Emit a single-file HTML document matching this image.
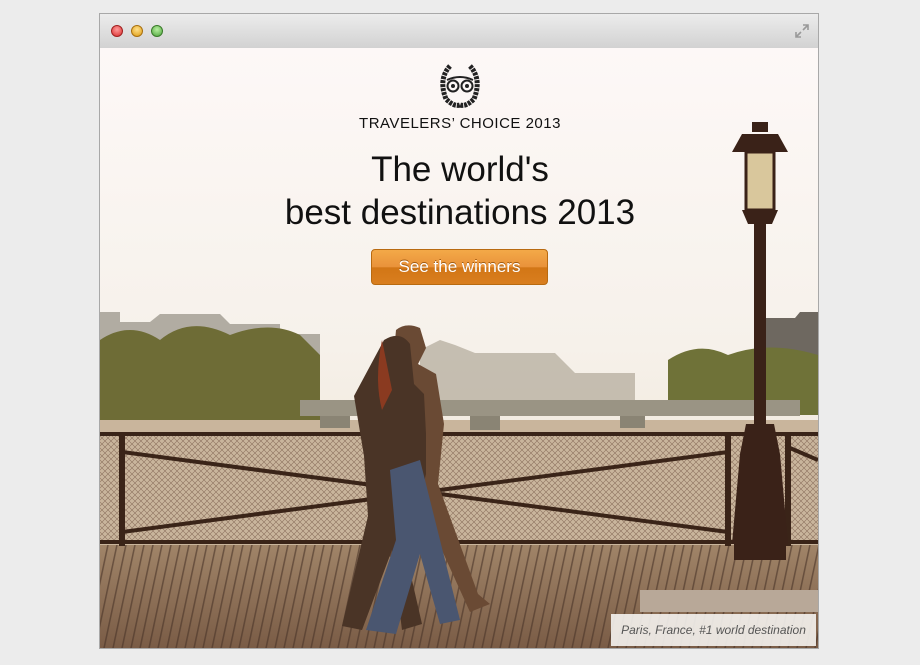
<!DOCTYPE html>
<html><head><meta charset="utf-8"><style>
body{margin:0;width:920px;height:665px;background:#ececec;position:relative;overflow:hidden;font-family:"Liberation Sans",sans-serif}
.win{position:absolute;left:99px;top:13px;width:718px;height:634px;border:1px solid #a8a8a8;background:#fff}
.bar{position:absolute;left:0;top:0;width:718px;height:34px;background:linear-gradient(#ececec,#d2d2d2);border-bottom:1px solid #9a9a9a}
.dot{position:absolute;top:11px;width:12px;height:12px;border-radius:50%;box-sizing:border-box}
.t{position:absolute;left:0;width:920px;text-align:center;color:#111}
.btn{position:absolute;left:371px;top:249px;width:175px;height:34px;border:1px solid #b86a10;border-radius:4px;background:linear-gradient(#f3a948 0%,#e9923a 50%,#d27615 52%,#d97e1f 100%);color:#fff;font-size:17px;line-height:34px;text-align:center;text-shadow:0 -1px 0 #a05a10}
.cap{position:absolute;left:611px;top:614px;width:205px;height:32px;background:rgba(245,243,240,.9);font-style:italic;font-size:12px;color:#555;line-height:32px;text-align:center}
</style></head><body>
<div class="win">
<div class="bar">
<div class="dot" style="left:11px;background:radial-gradient(circle at 50% 35%,#ff9a9a,#d82b2b);border:1px solid #a02020"></div>
<div class="dot" style="left:31px;background:radial-gradient(circle at 50% 35%,#ffe08a,#dd9a10);border:1px solid #a87010"></div>
<div class="dot" style="left:51px;background:radial-gradient(circle at 50% 35%,#b8f0a0,#4aa23a);border:1px solid #3a7a2a"></div>
<svg style="position:absolute;left:694px;top:9px" width="16" height="16" viewBox="0 0 16 16"><path d="M9 2h5v5M14 2l-5 5M7 14H2V9M2 14l5-5" stroke="#999" stroke-width="1.6" fill="none"/></svg>
</div>
</div>
<svg style="position:absolute;left:100px;top:48px" width="718" height="600" viewBox="100 48 718 600">
<defs>
<linearGradient id="sky" x1="0" y1="0" x2="0" y2="1"><stop offset="0" stop-color="#fdf8f7"/><stop offset=".5" stop-color="#f6f1ea"/><stop offset="1" stop-color="#e8dcc8"/></linearGradient>
<linearGradient id="deck" x1="0" y1="0" x2="0" y2="1"><stop offset="0" stop-color="#a08468"/><stop offset="1" stop-color="#7a5c46"/></linearGradient>
<pattern id="mesh" width="6" height="6" patternUnits="userSpaceOnUse"><path d="M0 0L6 6M6 0L0 6" stroke="#5a3a2a" stroke-width=".6" opacity=".55"/></pattern>
<pattern id="plank" width="9" height="120" patternUnits="userSpaceOnUse" patternTransform="skewX(-12)"><rect x="7" width="1.6" height="120" fill="#4a3428" opacity=".6"/></pattern>
</defs>
<rect x="100" y="48" width="718" height="600" fill="url(#sky)"/>
<path d="M100 312h20v10h30l10-8h60l10 10h50v10h40v50h-220z" fill="#9a948a" opacity=".75"/>
<path d="M420 350l20-10 15 5 20 8h80l20 20h60v30h-215z" fill="#b0a898" opacity=".7"/>
<path d="M765 318h30l5-6h18v80h-53z" fill="#6e6860"/>
<path d="M100 340q30-20 60 0 30-25 70-5 40-15 70 0l20 20v75h-220z" fill="#6e6c36"/>
<path d="M668 360q30-20 60-5 40-15 90 0v60h-150z" fill="#6f7238"/>
<rect x="100" y="420" width="718" height="125" fill="#c9b59c"/>
<path d="M300 400h500v16h-500z" fill="#9a9484"/>
<path d="M320 416h30v12h-30zM470 416h30v14h-30zM620 416h25v12h-25z" fill="#8a8474"/>
<rect x="100" y="545" width="718" height="103" fill="url(#deck)"/>
<rect x="100" y="545" width="718" height="103" fill="url(#plank)"/>
<rect x="100" y="436" width="718" height="106" fill="url(#mesh)"/>
<g stroke="#3a2418" fill="none">
<path d="M100 434H818M100 542H818" stroke-width="4"/>
<path d="M122 434v112M728 434v112M788 434v112" stroke-width="6"/>
<path d="M122 452L728 532M122 532L728 452M790 448L818 460" stroke-width="4"/>
</g>
<g fill="#3a2218">
<path d="M752 122h16v10h-16zM742 134h36l10 18h-56z"/>
<rect x="746" y="152" width="28" height="58" fill="#d9c79c" stroke="#3a2218" stroke-width="3"/>
<path d="M742 210h36l-6 14h-24zM754 224h12v200h-12z"/>
<path d="M746 424h28l6 30h-40zM740 454h40l8 90h-56zM734 544h52v16h-52z"/>
</g>
<g>
<path d="M396 330q10-8 24-2l6 20-8 16 18 10 8 50-6 60 40 110 12 10-20 8-50-110-14 60-30-10z" fill="#6a4a34"/>
<path d="M384 340q16-10 26 4l4 40 10 10 2 40 0 40-20 80 16 70-20 6-10-80-30 80-20-4 26-110-4-60-10-60z" fill="#4a3426"/>
<path d="M390 470l30-10 20 80 20 80-20 4-20-70-24 80-30-4 30-90z" fill="#4a5670"/>
<path d="M382 340q-8 40 0 70l10-20z" fill="#8a3a20"/>
</g>
<path d="M640 590h178v22h-178z" fill="#b8a898"/>
</svg>
<svg style="position:absolute;left:436px;top:61px" width="48" height="48" viewBox="0 0 48 48">
<path d="M14 5Q2 18 10 38Q18 46 24 44M34 5Q46 18 38 38Q30 46 24 44" fill="none" stroke="#222" stroke-width="5" stroke-dasharray="3 1"/>
<circle cx="17" cy="25" r="5.5" fill="none" stroke="#222" stroke-width="2"/><circle cx="31" cy="25" r="5.5" fill="none" stroke="#222" stroke-width="2"/>
<circle cx="17" cy="25" r="2" fill="#222"/><circle cx="31" cy="25" r="2" fill="#222"/>
<path d="M11 19Q24 13 37 19" stroke="#222" stroke-width="2" fill="none"/>
</svg>
<div class="t" style="top:115px;font-size:15px;letter-spacing:.5px">TRAVELERS’ CHOICE 2013</div>
<div class="t" style="top:148px;font-size:35px;line-height:43px">The world's<br>best destinations 2013</div>
<div class="btn">See the winners</div>
<div class="cap">Paris, France, #1 world destination</div>
</body></html>
